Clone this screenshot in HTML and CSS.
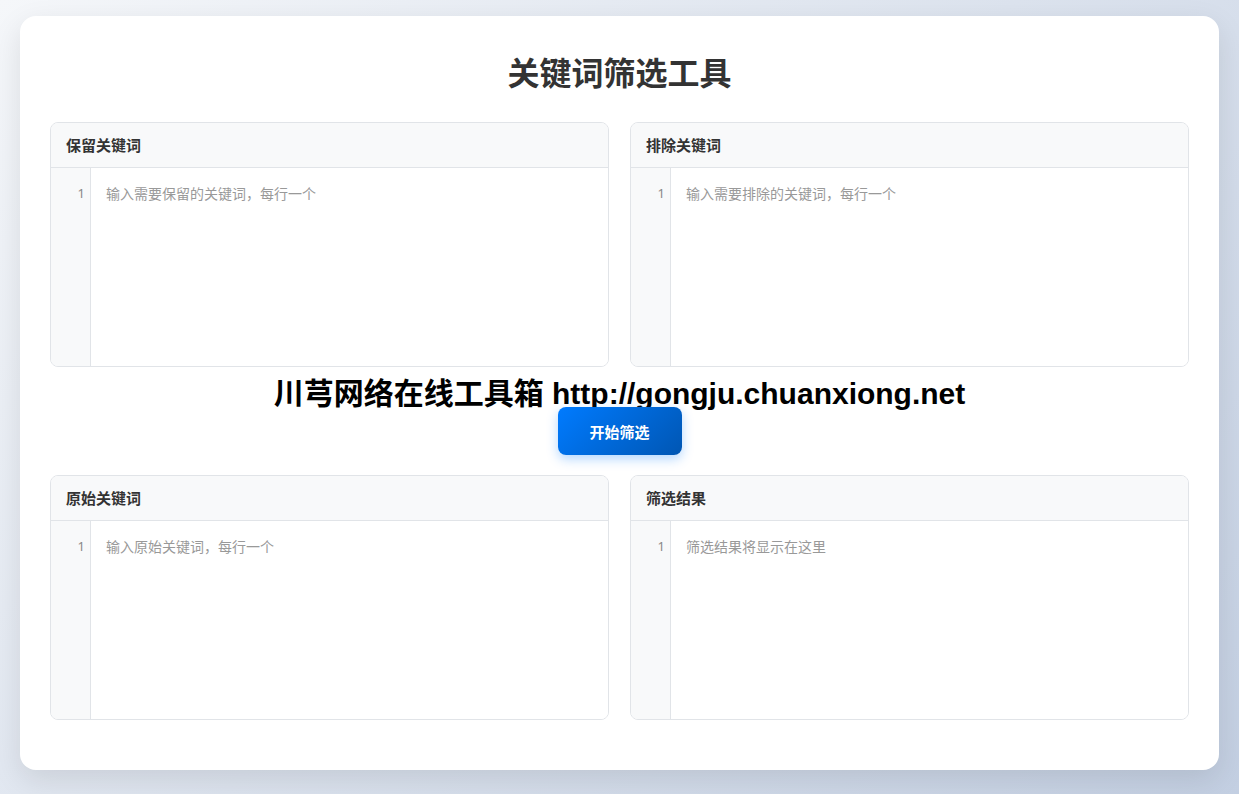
FILE: index.html
```html
<!DOCTYPE html>
<html lang="zh-CN">
<head>
  <meta charset="UTF-8">
  <meta name="viewport" content="width=device-width, initial-scale=1.0">
  <title>关键词筛选工具</title>
  <link rel="stylesheet" href="styles.css">
</head>
<body>
  <div class="container">
    <h1>关键词筛选工具</h1>

    <div class="panel-grid">
      <div class="panel">
        <div class="panel-header">保留关键词</div>
        <div class="editor">
          <div class="gutter">1</div>
          <textarea class="editor-input" placeholder="输入需要保留的关键词，每行一个"></textarea>
        </div>
      </div>
      <div class="panel">
        <div class="panel-header">排除关键词</div>
        <div class="editor">
          <div class="gutter">1</div>
          <textarea class="editor-input" placeholder="输入需要排除的关键词，每行一个"></textarea>
        </div>
      </div>
    </div>

    <div class="actions">
      <div class="watermark">川芎网络在线工具箱 http://gongju.chuanxiong.net</div>
      <button class="filter-button">开始筛选</button>
    </div>

    <div class="panel-grid">
      <div class="panel">
        <div class="panel-header">原始关键词</div>
        <div class="editor">
          <div class="gutter">1</div>
          <textarea class="editor-input" placeholder="输入原始关键词，每行一个"></textarea>
        </div>
      </div>
      <div class="panel">
        <div class="panel-header">筛选结果</div>
        <div class="editor">
          <div class="gutter">1</div>
          <textarea class="editor-input" placeholder="筛选结果将显示在这里" readonly></textarea>
        </div>
      </div>
    </div>
  </div>
</body>
</html>
```

FILE: styles.css
```css
body {
  font-family: "Noto Sans CJK SC", "Noto Sans", sans-serif;
  margin: 0;
  padding: 16px 20px 25px;
  min-height: 100vh;
  box-sizing: border-box;
  background: linear-gradient(135deg, #f5f7fa 0%, #c3cfe2 100%);
  color: #333;
}

.container {
  background: #fff;
  border-radius: 16px;
  padding: 36px 30px 50px;
  box-shadow: 0 10px 30px rgba(0, 0, 0, 0.1);
}

h1 {
  margin: 0 0 32px;
  font-size: 32px;
  line-height: 38px;
  font-weight: 700;
  text-align: center;
  color: #333;
}

.panel-grid {
  display: grid;
  grid-template-columns: 1fr 1fr;
  gap: 21px;
}

.panel {
  border: 1px solid #e1e4e8;
  border-radius: 8px;
  overflow: hidden;
}

.panel-header {
  background: #f8f9fa;
  border-bottom: 1px solid #e1e4e8;
  padding: 12px 15px;
  font-size: 15px;
  line-height: 20px;
  font-weight: 700;
  color: #333;
}

.editor {
  display: flex;
  height: 198px;
}

.gutter {
  flex-shrink: 0;
  background: #f8f9fa;
  border-right: 1px solid #e1e4e8;
  padding: 15px 5px 0 0;
  box-sizing: border-box;
  width: 40px;
  text-align: right;
  font-family: "Noto Sans", sans-serif;
  font-size: 13px;
  line-height: 20px;
  color: #888;
}

.editor-input {
  flex: 1;
  border: none;
  outline: none;
  resize: none;
  padding: 15px;
  margin: 0;
  font-family: "Noto Sans CJK SC", "Noto Sans", sans-serif;
  font-size: 14px;
  line-height: 20px;
  color: #333;
  background: #fff;
}

.editor-input::placeholder {
  color: #999;
}

.actions {
  display: flex;
  flex-direction: column;
  align-items: center;
  margin: 20px 0;
}

.watermark {
  height: 20px;
  line-height: 14px;
  font-family: "Liberation Sans", "Noto Sans CJK SC", sans-serif;
  font-size: 30px;
  font-weight: 700;
  color: #000;
  white-space: nowrap;
}

.filter-button {
  width: 124px;
  height: 48px;
  border: none;
  border-radius: 8px;
  background: linear-gradient(135deg, #007bff, #0056b3);
  color: #fff;
  font-family: "Noto Sans CJK SC", sans-serif;
  font-size: 15px;
  font-weight: 700;
  cursor: pointer;
  box-shadow: 0 4px 12px rgba(0, 123, 255, 0.3);
}
```
